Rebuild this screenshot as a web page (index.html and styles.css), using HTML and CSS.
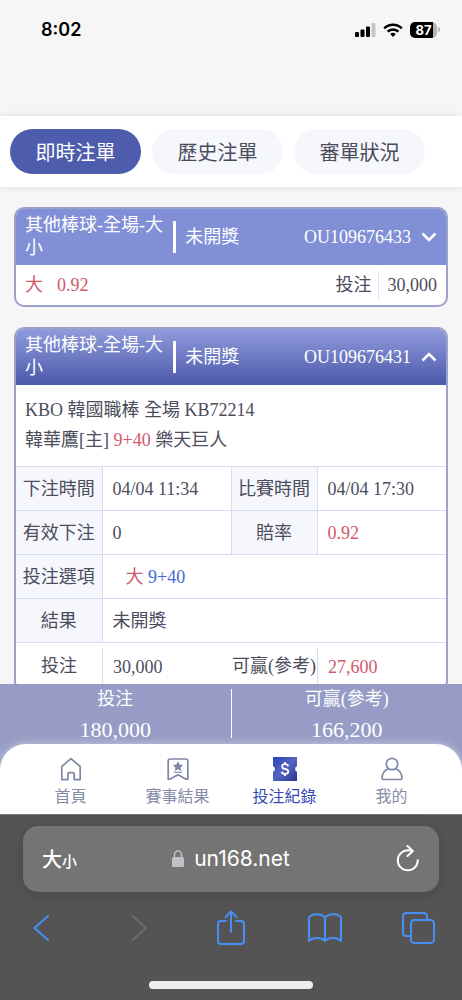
FILE: index.html
```html
<!DOCTYPE html>
<html lang="zh-Hant">
<head>
<meta charset="utf-8">
<meta name="viewport" content="width=device-width, initial-scale=1">
<title>投注紀錄</title>
<link rel="stylesheet" href="styles.css">
</head>
<body>
<div class="phone">
  <div class="status">
    <span class="clock">8:02</span>
    <span class="status-icons">
      <svg width="21" height="14" viewBox="0 0 21 14"><rect x="0" y="9" width="4" height="5" rx="1"/><rect x="5.500" y="6.500" width="4" height="7.500" rx="1"/><rect x="11" y="3.500" width="4" height="10.500" rx="1"/><rect x="16.500" y="0" width="4" height="14" rx="1" fill="#c6c6c6"/></svg>
      <svg width="20" height="14" viewBox="0 0 20 14" fill="none" stroke="#000" stroke-width="2.500"><path d="M1.200 5.300a12.500 12.500 0 0 1 17.600 0"/><path d="M4.600 8.700a7.700 7.700 0 0 1 10.800 0"/><path d="M10 14l-2.800-2.900a4 4 0 0 1 5.600 0z" fill="#000" stroke="none"/></svg>
      <span class="battery">87</span>
    </span>
  </div>

  <nav class="tabs">
    <button class="tab tab-on" type="button">即時注單</button>
    <button class="tab" type="button">歷史注單</button>
    <button class="tab" type="button">審單狀況</button>
  </nav>

  <main class="list">
    <article class="card">
      <button class="card-head" type="button">
        <span class="card-title">其他棒球-全場-大小</span>
        <span class="card-state">未開獎</span>
        <span class="card-no">OU109676433</span>
        <svg class="chev" width="16" height="10" viewBox="0 0 16 10"><path d="M1.500 1.500L8 8l6.500-6.500"/></svg>
      </button>
      <div class="brief">
        <span class="red">大</span>
        <span class="red">0.92</span>
        <span class="brief-label">投注</span>
        <span class="brief-value">30,000</span>
      </div>
    </article>

    <article class="card">
      <button class="card-head card-head-open" type="button">
        <span class="card-title">其他棒球-全場-大小</span>
        <span class="card-state">未開獎</span>
        <span class="card-no">OU109676431</span>
        <svg class="chev" width="16" height="10" viewBox="0 0 16 10"><path d="M1.500 8.500L8 2l6.500 6.500"/></svg>
      </button>
      <div class="match">
        <div>KBO 韓國職棒 全場 KB72214</div>
        <div>韓華鷹[主] <span class="red">9+40</span> 樂天巨人</div>
      </div>
      <table class="detail">
        <colgroup><col class="col-key"><col><col class="col-key"><col></colgroup>
        <tr><th>下注時間</th><td>04/04 11:34</td><th>比賽時間</th><td>04/04 17:30</td></tr>
        <tr><th>有效下注</th><td>0</td><th>賠率</th><td class="red">0.92</td></tr>
        <tr><th>投注選項</th><td class="pick" colspan="3"><span class="red">大</span> <span class="blue">9+40</span></td></tr>
        <tr><th>結果</th><td colspan="3">未開獎</td></tr>
        <tr class="total"><th>投注</th><td><span class="ruled">30,000</span></td><th>可贏(參考)</th><td><span class="ruled red">27,600</span></td></tr>
      </table>
    </article>
  </main>

  <footer class="bottom">
    <div class="summary">
      <div class="sum"><span>投注</span><span class="sum-num">180,000</span></div>
      <div class="sum"><span>可贏(參考)</span><span class="sum-num">166,200</span></div>
    </div>
    <nav class="menu">
      <a class="item" href="#">
        <svg width="24" height="24" viewBox="0 0 24 24" fill="none" stroke="#7f86a6" stroke-width="1.700" stroke-linejoin="round"><path d="M2.800 9.400L12 1.700l9.200 7.700v13.200h-6v-5.400q0-1.500-1.500-1.500h-3.400q-1.500 0-1.500 1.500v5.400h-6z"/></svg>
        <span>首頁</span>
      </a>
      <a class="item" href="#">
        <svg width="24" height="24" viewBox="0 0 24 24" fill="none" stroke="#7f86a6" stroke-width="1.700" stroke-linejoin="round"><path d="M4 2h16q1.800 0 1.800 1.800v18.400h-1.600L12 17.800l-8.200 4.400H2.200V3.800Q2.200 2 4 2z"/><path d="M12 4.200l1.600 3.200 3.500.5-2.500 2.500.6 3.500-3.200-1.700-3.200 1.700.6-3.500-2.500-2.500 3.500-.5z" fill="#7f86a6" stroke="none"/><path d="M8 15.300h8" stroke-width="1.200"/></svg>
        <span>賽事結果</span>
      </a>
      <a class="item item-on" href="#">
        <svg width="24" height="24" viewBox="0 0 24 24"><defs><linearGradient id="ticket" x1="0" y1="0" x2="1" y2="1"><stop offset="0" stop-color="#2c43b8"/><stop offset=".5" stop-color="#5364c2"/><stop offset="1" stop-color="#26358f"/></linearGradient></defs><path d="M0 0h24v9.200a3 3 0 0 0 0 5.600V24H0v-9.200a3 3 0 0 0 0-5.600z" fill="url(#ticket)"/><path d="M15.200 9.200q-.5-2-3.200-2-2.900 0-2.900 2.200 0 1.900 3 2.500 3.200.6 3.200 2.700 0 2.300-3.200 2.300-2.900 0-3.400-2.200M12 5v2M12 17v2" fill="none" stroke="#fff" stroke-width="1.800"/></svg>
        <span>投注紀錄</span>
      </a>
      <a class="item" href="#">
        <svg width="24" height="24" viewBox="0 0 24 24" fill="none" stroke="#7f86a6" stroke-width="1.700" stroke-linejoin="round"><circle cx="12" cy="7" r="5.700"/><path d="M8.200 11.800C4.500 13.600 2 17.300 2 21.200q0 1.300 1.300 1.300h17.400q1.300 0 1.300-1.300c0-3.900-2.500-7.600-6.200-9.400"/></svg>
        <span>我的</span>
      </a>
    </nav>
  </footer>

  <div class="browser">
    <div class="address">
      <button class="plain text-size" type="button">大<small>小</small></button>
      <button class="plain host" type="button">
        <svg width="12" height="18" viewBox="0 0 12 18"><rect x="0" y="7" width="12" height="10" rx="1.600" fill="#c3c1c8"/><path d="M2.500 8V4.600a3.500 3.500 0 0 1 7 0V8" fill="none" stroke="#c3c1c8" stroke-width="1.500"/></svg>
        un168.net
      </button>
      <button class="plain reload" type="button" aria-label="重新載入"><svg width="24" height="28" viewBox="0 0 24 28" fill="none" stroke="#fff" stroke-width="2" stroke-linecap="round" stroke-linejoin="round"><path d="M21.800 15.200A10 10 0 1 1 12 5.300q2 0 4.200.6"/><path d="M11.500 1l5.300 5-5.300 5"/></svg></button>
    </div>
    <div class="tools">
      <button class="plain" type="button" aria-label="上一頁"><svg width="36" height="36" viewBox="0 0 36 36"><path d="M23 6L9.500 18 23 30"/></svg></button>
      <button class="plain dim" type="button" aria-label="下一頁"><svg width="36" height="36" viewBox="0 0 36 36"><path d="M13.500 6L27 18 13.500 30"/></svg></button>
      <button class="plain" type="button" aria-label="分享"><svg width="36" height="36" viewBox="0 0 36 36"><path d="M13 11H8q-3 0-3 3v17q0 3 3 3h20q3 0 3-3V14q0-3-3-3h-5M18 22V2M12.500 7L18 1.500 23.500 7"/></svg></button>
      <button class="plain" type="button" aria-label="書籤"><svg width="36" height="36" viewBox="0 0 36 36"><path d="M18 7.500C14.500 3.500 5 3 2 7.500V31c4-4 12.500-4 16 0 3.500-4 12-4 16 0V7.500C31 3 21.500 3.500 18 7.500zV31"/></svg></button>
      <button class="plain" type="button" aria-label="分頁"><svg width="36" height="36" viewBox="0 0 36 36"><rect x="10" y="10" width="23" height="23" rx="3.500"/><path d="M10 26H5.500Q2 26 2 22.500V6.500Q2 3 5.500 3h17Q26 3 26 6.500V10"/></svg></button>
    </div>
    <div class="home-bar"></div>
  </div>
</div>
</body>
</html>
```
FILE: styles.css
```css
* { box-sizing: border-box; }

body {
  margin: 0;
  background: #f6f6f6;
  color: #4b4d5c;
  font: 400 18px/22px "Liberation Serif", "Noto Sans CJK TC", serif;
}

button {
  border: 0;
  font: inherit;
  color: inherit;
}

.phone {
  display: flex;
  flex-direction: column;
  height: 100vh;
}

.status {
  display: flex;
  justify-content: space-between;
  align-items: flex-start;
  height: 116px;
  padding: 18px 22px 0 41px;
  flex-shrink: 0;
  color: #000;
}

.clock { font: 600 18px/24px Inter, sans-serif; }

.status-icons {
  display: flex;
  align-items: center;
  gap: 7px;
  height: 23px;
}

.battery {
  position: relative;
  width: 27px;
  margin-right: 3px;
  border-radius: 5px;
  background: linear-gradient(90deg, #000 87%, #b4b4b4 87%);
  color: #fff;
  font: 700 13px/16px Inter, sans-serif;
  text-align: center;
}

.battery::after {
  content: "";
  position: absolute;
  top: 5px;
  right: -3px;
  width: 2px;
  height: 5px;
  border-radius: 0 2px 2px 0;
  background: #b4b4b4;
}

.tabs {
  display: flex;
  gap: 11px;
  padding: 13px 10px;
  flex-shrink: 0;
  background: #fff;
  box-shadow: 0 0 8px rgba(0, 0, 0, .1);
}

.tab {
  width: 131px;
  height: 45px;
  padding: 0;
  border-radius: 23px;
  background: #f6f7fd;
  font: 400 20px/24px "Noto Sans CJK TC", sans-serif;
}

.tab-on {
  background: #4d5cac;
  color: #fff;
}

.list {
  display: flex;
  flex-direction: column;
  gap: 20px;
  flex: 1;
  min-height: 0;
  padding: 20px 14px 0;
  overflow: hidden;
}

.card {
  flex-shrink: 0;
  border: 2px solid #9ba1cb;
  border-radius: 10px;
  background: #fff;
  overflow: hidden;
}

.card-head {
  display: flex;
  align-items: center;
  width: 100%;
  padding: 5px 9px;
  background: #818fd6;
  color: #fff;
  text-align: left;
}

.card-head-open { background: linear-gradient(#8f9bdb, #4c59ab); }

.card-title {
  flex: 0 0 36%;
  line-height: 23px;
}

.card-state {
  padding: 5px 0 5px 9px;
  border-left: 3px solid #fff;
}

.card-no { margin-left: auto; }

.chev {
  margin-left: 10px;
  fill: none;
  stroke: #fff;
  stroke-width: 2.5;
}

.brief {
  display: flex;
  align-items: center;
  gap: 14px;
  padding: 6px 9px;
  line-height: 28px;
}

.brief-label { margin: 0 -8px 0 auto; }

.brief-value {
  padding-left: 9px;
  border-left: 1px solid #dcdff3;
}

.red { color: #d05a68; }
.blue { color: #4967d6; }

.match {
  padding: 10px 9px 11px;
  line-height: 30px;
}

.detail {
  width: 100%;
  table-layout: fixed;
  border-collapse: collapse;
}

.col-key { width: 20%; }

.detail th,
.detail td {
  height: 44px;
  padding: 0;
  border-top: 1px solid #d7dcf2;
  font-weight: 400;
  white-space: nowrap;
}

.detail th {
  border-right: 1px solid #d7dcf2;
  background: #f6f7fd;
}

.detail td + th { border-left: 1px solid #d7dcf2; }

.detail td {
  padding-left: 10px;
  text-align: left;
}

.detail .pick { padding-left: 23px; }

.detail .total th,
.detail .total td { height: 46px; }

.detail .total th {
  border-right: 0;
  border-left: 0;
  background: none;
}

.detail .total td { padding-left: 0; }

.ruled {
  display: block;
  margin-top: 3px;
  padding-left: 10px;
  border-left: 1px solid #d7dcf2;
  line-height: 38px;
}

.bottom {
  flex-shrink: 0;
  background: #969cc5;
}

.summary {
  display: flex;
  padding: 5px 0 6px;
  color: #fff;
}

.sum {
  display: flex;
  flex: 1;
  flex-direction: column;
  gap: 9px;
  align-items: center;
  height: 49px;
  line-height: 20px;
}

.sum + .sum { border-left: 1px solid #fff; }

.sum-num {
  font-size: 22px;
  line-height: 24px;
}

.menu {
  display: flex;
  padding: 13px 17px 8px;
  border-radius: 26px 26px 0 0;
  background: #fff;
  box-shadow: 0 0 8px rgba(255, 255, 255, .5);
}

.item {
  display: flex;
  flex: 1;
  flex-direction: column;
  gap: 3px;
  align-items: center;
  color: #858ba8;
  font: 400 16px/22px "Noto Sans CJK TC", sans-serif;
  text-decoration: none;
}

.item-on { color: #3447b5; }

.browser {
  flex-shrink: 0;
  padding: 11px 23px;
  border-top: 1px solid #777;
  background: #545454;
}

.address {
  display: grid;
  grid-template-columns: 1fr auto 1fr;
  align-items: center;
  height: 66px;
  padding: 0 19px;
  border-radius: 15px;
  background: #747474;
  box-shadow: 0 2px 14px rgba(0, 0, 0, .16);
  color: #fff;
}

.plain {
  display: flex;
  align-items: center;
  padding: 0;
  background: none;
}

.text-size { font: 500 20px/28px "Noto Sans CJK TC", sans-serif; }
.text-size small { font-size: 15px; padding-top: 3px; }

.host {
  gap: 10px;
  font: 400 21px/28px Inter, sans-serif;
}

.reload { justify-self: end; }

.tools {
  display: flex;
  justify-content: space-between;
  margin: 18px 2px 0;
}

.tools svg {
  fill: none;
  stroke: #478ef5;
  stroke-width: 2;
  stroke-linecap: round;
  stroke-linejoin: round;
}

.tools .dim svg { stroke: #6d6d6d; }

.home-bar {
  width: 164px;
  height: 8px;
  margin: 35px auto 0;
  border-radius: 4px;
  background: #eee;
}
```
